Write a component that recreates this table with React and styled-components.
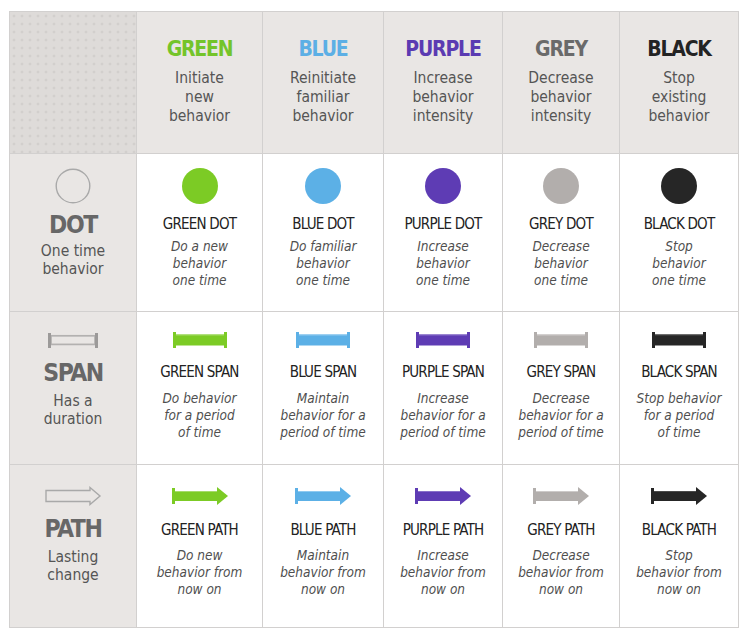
import React from "react";
import styled, { createGlobalStyle } from "styled-components";

const NARROW = `"Liberation Sans Narrow", "DejaVu Sans Condensed", "Liberation Sans", sans-serif`;
const COND = `"DejaVu Sans Condensed", "DejaVu Sans", sans-serif`;

const GlobalStyle = createGlobalStyle`
  body {
    margin: 0;
    background: #fff;
  }
`;

const Page = styled.div`
  padding: 11px 0 0 9px;
`;

const Table = styled.div`
  display: grid;
  grid-template-columns: 126px 125px 120px 118px 116px 118px;
  grid-template-rows: 141px 157px 152px 162px;
  gap: 1px;
  width: fit-content;
  background: #d2d0cf;
  border: 1px solid #d2d0cf;
`;

const Corner = styled.div`
  background-color: #dedbd9;
  background-image: radial-gradient(circle, #d2cfcd 1.2px, transparent 1.7px);
  background-size: 8px 8px;
  background-position: 0 0;
`;

const HeadCell = styled.div`
  background: #e9e6e4;
  display: flex;
  flex-direction: column;
  align-items: center;
  padding-top: 24px;
  text-align: center;
`;

const HeadTitle = styled.div`
  font-family: ${NARROW};
  font-stretch: condensed;
  font-weight: bold;
  font-size: 21px;
  line-height: 26px;
  letter-spacing: -1.2px;
  color: ${(p) => p.$color};
`;

const HeadSub = styled.div`
  margin-top: 7px;
  font-family: ${COND};
  font-stretch: condensed;
  font-size: 15.5px;
  line-height: 19px;
  color: #555;
`;

const Cell = styled.div`
  background: ${(p) => (p.$side ? "#e9e6e4" : "#fff")};
  display: flex;
  flex-direction: column;
  align-items: center;
  text-align: center;
  padding-top: ${(p) => p.$pad}px;
`;

const IconBox = styled.div`
  height: 40px;
  display: flex;
  align-items: center;
  justify-content: center;
`;

const RowLabel = styled.div`
  margin-top: ${(p) => p.$gap}px;
  font-family: ${NARROW};
  font-stretch: condensed;
  font-weight: bold;
  font-size: 24.5px;
  line-height: 30px;
  letter-spacing: -1.4px;
  color: #676767;
`;

const RowDesc = styled.div`
  margin-top: ${(p) => p.$gap}px;
  font-family: ${COND};
  font-stretch: condensed;
  font-size: 15.5px;
  line-height: 18px;
  color: #555;
`;

const ItemTitle = styled.div`
  margin-top: ${(p) => p.$gap}px;
  font-family: ${NARROW};
  font-stretch: condensed;
  font-size: 15px;
  line-height: 18px;
  letter-spacing: -0.8px;
  color: #222;
`;

const ItemDesc = styled.div`
  margin-top: ${(p) => p.$gap}px;
  font-family: ${COND};
  font-stretch: condensed;
  font-style: italic;
  font-size: 13.5px;
  line-height: 17px;
  color: #4f4f4f;
`;

const COLORS = [
  { name: "GREEN", head: "#74c42a", fill: "#7ccb25", light: "#a6db6a", sub: ["Initiate", "new", "behavior"] },
  { name: "BLUE", head: "#5cafe5", fill: "#5cb0e6", light: "#8fcaf0", sub: ["Reinitiate", "familiar", "behavior"] },
  { name: "PURPLE", head: "#5b3bb2", fill: "#5e3cb4", light: "#8870c9", sub: ["Increase", "behavior", "intensity"] },
  { name: "GREY", head: "#6a6a6a", fill: "#b2aeac", light: "#cdcac9", sub: ["Decrease", "behavior", "intensity"] },
  { name: "BLACK", head: "#232323", fill: "#262626", light: "#4a4a4a", sub: ["Stop", "existing", "behavior"] },
];

const ROWS = [
  {
    kind: "DOT",
    desc: ["One time", "behavior"],
    pad: 12, labelGap: 4, descGap: 2, titleGap: 9, itemGap: 5,
    items: [
      ["Do a new", "behavior", "one time"],
      ["Do familiar", "behavior", "one time"],
      ["Increase", "behavior", "one time"],
      ["Decrease", "behavior", "one time"],
      ["Stop", "behavior", "one time"],
    ],
  },
  {
    kind: "SPAN",
    desc: ["Has a", "duration"],
    pad: 8, labelGap: -2, descGap: 4, titleGap: 3, itemGap: 9,
    items: [
      ["Do behavior", "for a period", "of time"],
      ["Maintain", "behavior for a", "period of time"],
      ["Increase", "behavior for a", "period of time"],
      ["Decrease", "behavior for a", "period of time"],
      ["Stop behavior", "for a period", "of time"],
    ],
  },
  {
    kind: "PATH",
    desc: ["Lasting", "change"],
    pad: 11, labelGap: -2, descGap: 4, titleGap: 5, itemGap: 8,
    items: [
      ["Do new", "behavior from", "now on"],
      ["Maintain", "behavior from", "now on"],
      ["Increase", "behavior from", "now on"],
      ["Decrease", "behavior from", "now on"],
      ["Stop", "behavior from", "now on"],
    ],
  },
];

const Lines = ({ lines }) =>
  lines.map((l, i) => (
    <React.Fragment key={i}>
      {i > 0 && <br />}
      {l}
    </React.Fragment>
  ));

// outline versions for the left column
function OutlineIcon({ kind }) {
  if (kind === "DOT") {
    return (
      <svg width="36" height="36" viewBox="0 0 36 36">
        <circle cx="18" cy="18" r="16.8" fill="none" stroke="#a9a9a9" strokeWidth="1.4" />
      </svg>
    );
  }
  if (kind === "SPAN") {
    return (
      <svg width="50" height="15" viewBox="0 0 50 15">
        <rect x="3" y="2.8" width="44" height="8.6" fill="none" stroke="#b3b1b0" strokeWidth="1.7" />
        <rect x="0" y="0" width="3" height="15" fill="#9c9a99" />
        <rect x="47" y="0" width="3" height="15" fill="#9c9a99" />
      </svg>
    );
  }
  return (
    <svg width="57" height="20" viewBox="0 0 57 20">
      <polygon
        points="1,4.5 45,4.5 45,1.5 55,10 45,18.5 45,15.5 1,15.5"
        fill="none"
        stroke="#a9a9a9"
        strokeWidth="1.4"
      />
    </svg>
  );
}

function FilledIcon({ kind, fill, light }) {
  if (kind === "DOT") {
    return (
      <svg width="36" height="36" viewBox="0 0 36 36">
        <circle cx="18" cy="18" r="18" fill={fill} />
      </svg>
    );
  }
  if (kind === "SPAN") {
    return (
      <svg width="54" height="16" viewBox="0 0 54 16">
        <rect x="3" y="2.5" width="48" height="11" fill={fill} />
        <rect x="3" y="2.5" width="48" height="1" fill={light} />
        <rect x="0" y="0" width="3" height="16" fill={fill} />
        <rect x="51" y="0" width="3" height="16" fill={fill} />
      </svg>
    );
  }
  return (
    <svg width="56" height="18" viewBox="0 0 56 18">
      <rect x="0" y="1" width="3" height="16" fill={fill} />
      <rect x="3" y="4" width="44" height="10" fill={fill} />
      <rect x="3" y="4" width="44" height="1" fill={light} />
      <polygon points="45,0 56,9 45,18" fill={fill} />
    </svg>
  );
}

export default function App() {
  return (
    <Page>
      <GlobalStyle />
      <Table>
        <Corner />
        {COLORS.map((c) => (
          <HeadCell key={c.name}>
            <HeadTitle $color={c.head}>{c.name}</HeadTitle>
            <HeadSub>
              <Lines lines={c.sub} />
            </HeadSub>
          </HeadCell>
        ))}

        {ROWS.map((row) => (
          <React.Fragment key={row.kind}>
            <Cell $side $pad={row.pad}>
              <IconBox>
                <OutlineIcon kind={row.kind} />
              </IconBox>
              <RowLabel $gap={row.labelGap}>{row.kind}</RowLabel>
              <RowDesc $gap={row.descGap}>
                <Lines lines={row.desc} />
              </RowDesc>
            </Cell>
            {COLORS.map((c, i) => (
              <Cell key={c.name} $pad={row.pad}>
                <IconBox>
                  <FilledIcon kind={row.kind} fill={c.fill} light={c.light} />
                </IconBox>
                <ItemTitle $gap={row.titleGap}>
                  {c.name} {row.kind}
                </ItemTitle>
                <ItemDesc $gap={row.itemGap}>
                  <Lines lines={row.items[i]} />
                </ItemDesc>
              </Cell>
            ))}
          </React.Fragment>
        ))}
      </Table>
    </Page>
  );
}
